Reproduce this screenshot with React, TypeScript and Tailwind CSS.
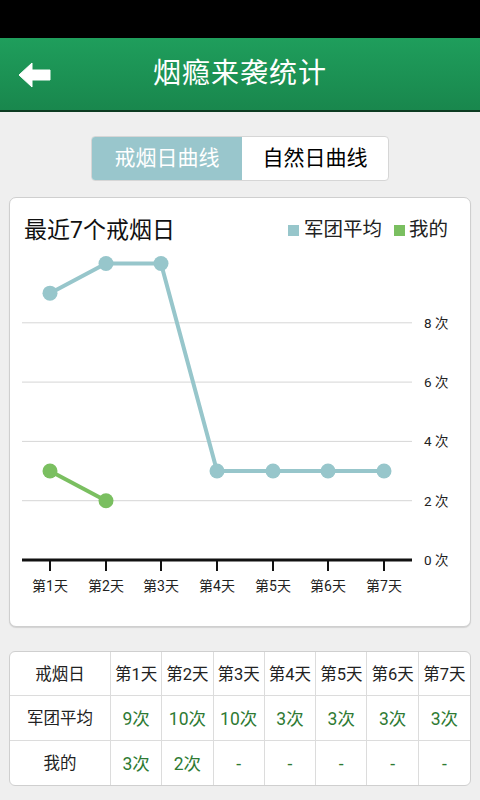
import React from "react";

const TEAL = "#97c6cb";
const GREEN = "#7abf60";

const xs = [50, 106, 161, 217, 273, 328, 384];
const yOf = (v: number) => 560 - v * 29.65;
const team = [9, 10, 10, 3, 3, 3, 3];
const mine = [3, 2];

const days = ["第1天", "第2天", "第3天", "第4天", "第5天", "第6天", "第7天"];
const teamText = ["9次", "10次", "10次", "3次", "3次", "3次", "3次"];
const mineText = ["3次", "2次", "-", "-", "-", "-", "-"];

// svg starts at page y = 248, page x = 10
const OX = 10;
const OY = 248;

function Chart() {
  const pts = (arr: number[]) =>
    arr.map((v, i) => `${xs[i] - OX},${yOf(v) - OY}`).join(" ");
  return (
    <svg width="459" height="370" viewBox="0 0 459 370" className="block">
      {[8, 6, 4, 2].map((v) => (
        <line key={v} x1={12} x2={402} y1={yOf(v) - OY} y2={yOf(v) - OY} stroke="#d6d6d6" strokeWidth={1} />
      ))}
      {[8, 6, 4, 2, 0].map((v) => (
        <text key={v} x={414} y={yOf(v) - OY + 5} fontSize="13.5" fill="#222" fontFamily="Roboto, 'Noto Sans CJK SC', sans-serif">
          {v} 次
        </text>
      ))}
      <line x1={12} x2={402} y1={560 - OY} y2={560 - OY} stroke="#111" strokeWidth={3} />
      {xs.map((x, i) => (
        <g key={i}>
          <line x1={x - OX} x2={x - OX} y1={560 - OY} y2={571 - OY} stroke="#111" strokeWidth={2} />
          <text x={x - OX} y={591 - OY} fontSize="14" textAnchor="middle" fill="#222" fontFamily="Roboto, 'Noto Sans CJK SC', sans-serif">
            {days[i]}
          </text>
        </g>
      ))}
      <polyline points={pts(team)} fill="none" stroke={TEAL} strokeWidth={4} />
      {team.map((v, i) => (
        <circle key={i} cx={xs[i] - OX} cy={yOf(v) - OY} r={7.5} fill={TEAL} />
      ))}
      <polyline points={pts(mine)} fill="none" stroke={GREEN} strokeWidth={4} />
      {mine.map((v, i) => (
        <circle key={i} cx={xs[i] - OX} cy={yOf(v) - OY} r={7.5} fill={GREEN} />
      ))}
    </svg>
  );
}

export default function App() {
  return (
    <div
      className="w-[480px] h-[800px] overflow-hidden bg-[#efefef] flex flex-col"
      style={{ fontFamily: "Roboto, 'Noto Sans CJK SC', sans-serif" }}
    >
      {/* status bar */}
      <div className="h-[38px] bg-black shrink-0" />

      {/* header */}
      <div className="h-[74px] shrink-0 relative flex items-center justify-center bg-gradient-to-b from-[#1f9e5c] to-[#19874d] border-b-2 border-[#0d3b22]">
        <svg width="32" height="26" viewBox="0 0 32 26" className="absolute left-[19px] top-[24px]">
          <path d="M0 13 L13 1 L13 8 L31 8 L31 18 L13 18 L13 25 Z" fill="#fff" strokeLinejoin="round" stroke="#fff" strokeWidth={1} />
        </svg>
        <span className="text-white text-[28px] leading-none tracking-[1px]">烟瘾来袭统计</span>
      </div>

      {/* toggle */}
      <div className="flex justify-center pt-[24px] shrink-0">
        <div className="flex w-[298px] h-[45px] rounded-[4px] border border-[#d6d6d6] overflow-hidden bg-white">
          <div className="w-[150px] bg-[#99c6cc] text-white text-[21px] flex items-center justify-center">戒烟日曲线</div>
          <div className="flex-1 text-black text-[21px] flex items-center justify-center">自然日曲线</div>
        </div>
      </div>

      {/* chart card */}
      <div className="mx-[9px] mt-[16px] h-[430px] shrink-0 bg-white rounded-[7px] border border-[#cfcfcf] shadow-[0_1px_1px_rgba(0,0,0,0.12)] overflow-hidden">
        <div className="flex items-center justify-between pl-[14px] pr-[22px] pt-[14px] h-[50px]">
          <span className="text-[23px] text-[#111] leading-none">最近7个戒烟日</span>
          <div className="flex items-center text-[19.5px] text-[#222] leading-none">
            <span className="w-[11px] h-[11px] bg-[#97c6cb] mr-[5px]" />
            <span>军团平均</span>
            <span className="w-[11px] h-[11px] bg-[#7abf60] ml-[12px] mr-[4px]" />
            <span>我的</span>
          </div>
        </div>
        <Chart />
      </div>

      {/* table */}
      <div className="mx-[9px] mt-[24px] shrink-0 bg-white rounded-[6px] border border-[#cfcfcf] overflow-hidden grid grid-cols-[101px_repeat(7,1fr)] text-[16.5px]">
        <div className="h-[44px] pt-[3px] flex items-center justify-center text-[#222] border-r border-b border-[#dcdcdc]">戒烟日</div>
        {days.map((d, i) => (
          <div key={d} className={`h-[44px] pt-[3px] flex items-center justify-center text-[#222] border-b border-[#dcdcdc] ${i < 6 ? "border-r" : ""}`}>
            {d}
          </div>
        ))}
        <div className="h-[45px] pt-[3px] flex items-center justify-center text-[#222] border-r border-b border-[#dcdcdc]">军团平均</div>
        {teamText.map((t, i) => (
          <div key={i} className={`h-[45px] pt-[3px] flex items-center justify-center text-[17.5px] text-[#2e7a33] border-b border-[#dcdcdc] ${i < 6 ? "border-r" : ""}`}>
            {t}
          </div>
        ))}
        <div className="h-[44px] pt-[3px] flex items-center justify-center text-[#222] border-r border-[#dcdcdc]">我的</div>
        {mineText.map((t, i) => (
          <div key={i} className={`h-[44px] pt-[3px] flex items-center justify-center text-[17.5px] text-[#2e7a33] border-[#dcdcdc] ${i < 6 ? "border-r" : ""}`}>
            {t}
          </div>
        ))}
      </div>
    </div>
  );
}
